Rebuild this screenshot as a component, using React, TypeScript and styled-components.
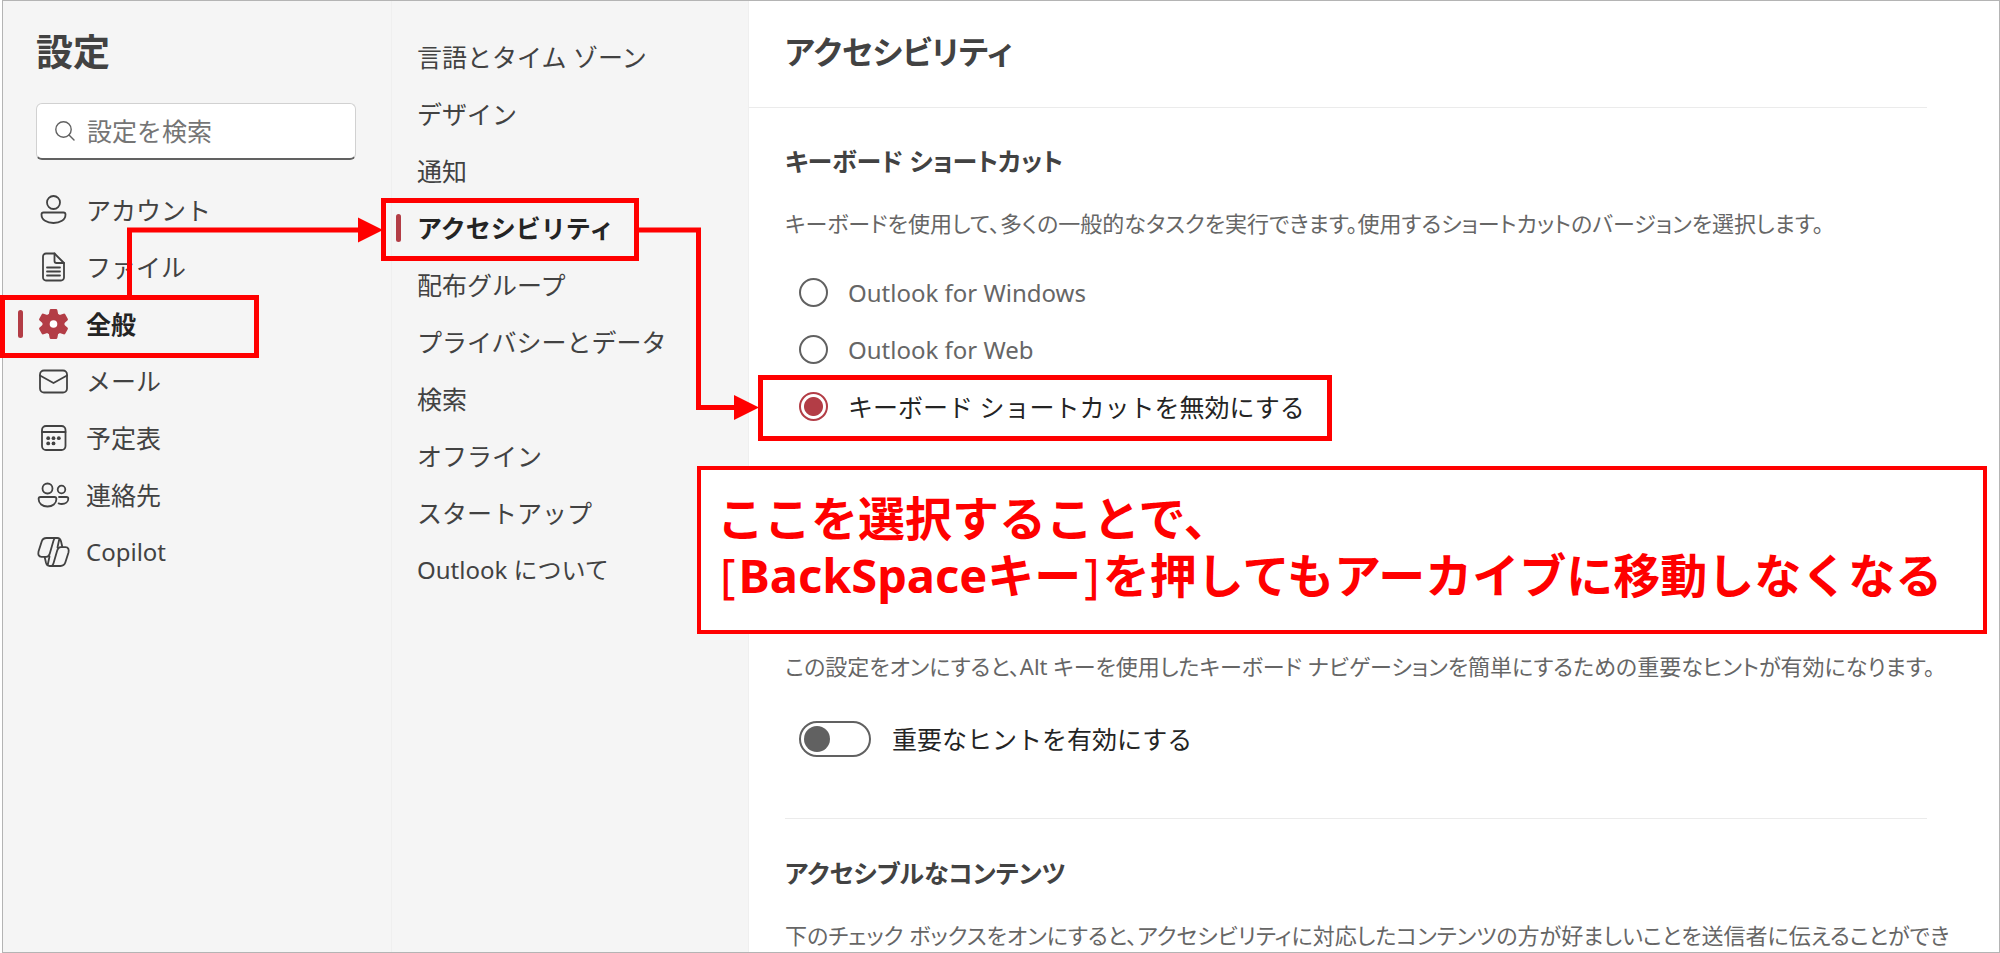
import React, { useState } from 'react';
import styled, { createGlobalStyle, css } from 'styled-components';

const color = {
  text: '#424242',
  strong: '#242424',
  muted: '#666666',
  accent: '#b33d46',
  line: '#ebebeb',
  pane: '#f5f5f5',
  mark: '#ff0000',
};

const GlobalStyle = createGlobalStyle`
  *, *::before, *::after { box-sizing: border-box; }
  body {
    margin: 0;
    background: #ffffff;
    color: ${color.text};
    font-family: 'Noto Sans', 'Noto Sans CJK JP', sans-serif;
    font-size: 25px;
    line-height: 36px;
  }
  h1, h2, h3, p, ul, fieldset { margin: 0; padding: 0; border: 0; }
  ul { list-style: none; }
`;

const Stage = styled.div`
  position: relative;
  height: 100vh;
  padding-left: 2px;
  overflow: hidden;
`;

const Frame = styled.div`
  display: flex;
  height: 100%;
  border: 1px solid #b4b4b4;
  overflow: hidden;
`;

const Categories = styled.aside`
  flex: 0 0 389px;
  min-width: 0;
  padding-top: 27px;
  background: ${color.pane};
  border-right: 1px solid #efefef;
`;

const SettingsTitle = styled.h1`
  padding-left: 33px;
  font-size: 37px;
  line-height: 48px;
`;

const SearchBox = styled.label`
  display: flex;
  align-items: center;
  gap: 12px;
  height: 57px;
  margin: 27px 35px 21px 33px;
  padding: 0 18px;
  background: #ffffff;
  border: 1px solid #d1d1d1;
  border-bottom: 2px solid #616161;
  border-radius: 6px;
`;

const SearchInput = styled.input`
  flex: 1;
  width: 100%;
  min-width: 0;
  padding: 0;
  border: 0;
  outline: 0;
  background: transparent;
  color: ${color.text};
  font: inherit;
  &::placeholder { color: #757575; opacity: 1; }
`;

const NavLink = styled.a<{ $active?: boolean; $latin?: boolean }>`
  display: flex;
  align-items: center;
  height: 57px;
  color: ${color.text};
  font-size: ${p => (p.$latin ? 24 : 25)}px;
  text-decoration: none;
  white-space: nowrap;
  &::before {
    content: '';
    width: 5px;
    height: 28px;
    border-radius: 3px;
  }
  ${p => p.$active && css`
    color: ${color.strong};
    font-weight: 700;
    &::before { background: ${color.accent}; }
  `}
`;

const CategoryLink = styled(NavLink)`
  padding-left: 15px;
  &::before { margin-right: 14px; }
`;

const PageLink = styled(NavLink)`
  padding-left: 4px;
  &::before { margin-right: 16px; }
`;

const NavIcon = styled.svg`
  flex: none;
  width: 33px;
  height: 32px;
  margin-right: 16px;
  fill: none;
  stroke: ${color.text};
  stroke-width: 1.8;
  stroke-linecap: round;
  stroke-linejoin: round;
`;

const SearchIcon = styled.svg`
  flex: none;
  width: 20px;
  height: 20px;
  fill: none;
  stroke: #616161;
  stroke-width: 1.4;
  stroke-linecap: round;
`;

const Pages = styled.nav`
  flex: 0 0 357px;
  min-width: 0;
  padding-top: 27px;
  background: ${color.pane};
  border-right: 1px solid #efefef;
`;

const Content = styled.main`
  flex: 1;
  min-width: 0;
  overflow: hidden;
`;

const ContentHeader = styled.header`
  margin-right: 72px;
  padding: 27px 0 31px 36px;
  border-bottom: 1px solid ${color.line};
`;

const PageTitle = styled.h2`
  font-size: 32px;
  line-height: 48px;
  font-feature-settings: 'palt';
`;

const Sections = styled.div`
  margin: 35px 72px 0 36px;
`;

const SectionTitle = styled.h3`
  margin-bottom: 26px;
  font-size: 25px;
  font-feature-settings: 'palt';
`;

const Description = styled.p`
  color: ${color.muted};
  font-size: 22px;
  font-feature-settings: 'palt';
  white-space: nowrap;
`;

const RadioGroup = styled.fieldset`
  margin: 23px 0 213px;
  padding-left: 14px;
`;

const Option = styled.label<{ $selected: boolean; $latin?: boolean }>`
  display: flex;
  align-items: center;
  gap: 20px;
  height: 57px;
  color: ${p => (p.$selected ? color.strong : color.muted)};
  font-size: ${p => (p.$latin ? 24 : 25)}px;
`;

const Radio = styled.input`
  appearance: none;
  width: 29px;
  height: 29px;
  margin: 0;
  border: 2px solid #616161;
  border-radius: 50%;
  &:checked {
    border-color: ${color.accent};
    background: radial-gradient(circle, ${color.accent} 9px, transparent 10px);
  }
`;

const SwitchRow = styled.label`
  display: flex;
  align-items: center;
  gap: 21px;
  margin-top: 37px;
  padding-left: 14px;
  color: ${color.strong};
`;

const Switch = styled.input`
  appearance: none;
  display: flex;
  align-items: center;
  width: 72px;
  height: 36px;
  margin: 0;
  padding: 0 3px;
  border: 2px solid #616161;
  border-radius: 18px;
  &::before {
    content: '';
    width: 26px;
    height: 26px;
    border-radius: 50%;
    background: #616161;
  }
  &:checked { justify-content: flex-end; }
`;

const Divider = styled.hr`
  height: 1px;
  margin: 61px 0 36px;
  border: 0;
  background: ${color.line};
`;

const Highlight = styled.div<{ $x: number; $y: number; $w: number; $h: number }>`
  position: absolute;
  left: ${p => p.$x}px;
  top: ${p => p.$y}px;
  width: ${p => p.$w}px;
  height: ${p => p.$h}px;
  border: 5px solid ${color.mark};
  pointer-events: none;
`;

const Arrows = styled.svg`
  position: absolute;
  left: 0;
  top: 0;
  width: 770px;
  height: 430px;
  pointer-events: none;
`;

const Callout = styled.div`
  position: absolute;
  left: 697px;
  right: 13px;
  top: 466px;
  height: 168px;
  padding: 20px 16px;
  border: 4px solid ${color.mark};
  background: #ffffff;
  color: ${color.mark};
  font-size: 47px;
  font-weight: 700;
  line-height: 57px;
  white-space: nowrap;
`;

const Bracket = styled.span`
  padding: 0 3px;
  font-weight: 400;
`;

const icons = {
  person: (
    <>
      <circle cx="16.5" cy="8.5" r="6.5" />
      <path d="M6.5 18.5H26.5C27.8 18.5 28.5 19.2 28.5 20.5C28.5 26 23 29 16.5 29S4.5 26 4.5 20.5C4.5 19.2 5.2 18.5 6.5 18.5Z" />
    </>
  ),
  file: (
    <>
      <path d="M9 2.5H17.5L27 12V26.5A3 3 0 0 1 24 29.5H9A3 3 0 0 1 6 26.5V5.5A3 3 0 0 1 9 2.5Z" />
      <path d="M17.5 2.5V10A2 2 0 0 0 19.5 12H27M10 16.5H23M10 20.5H23M10 24.5H23" />
    </>
  ),
  gear: (
    <g fill={color.accent} stroke="none">
      <circle cx="16.5" cy="16" r="11" />
      <path id="teeth" d="M12.6 2.2Q12.8 1 14 1H19Q20.2 1 20.4 2.2L21.3 7V25L20.4 29.8Q20.2 31 19 31H14Q12.8 31 12.6 29.8L11.7 25V7Z" />
      <use href="#teeth" transform="rotate(60 16.5 16)" />
      <use href="#teeth" transform="rotate(120 16.5 16)" />
      <circle cx="16.5" cy="16" r="3.8" fill="#ffffff" />
    </g>
  ),
  mail: (
    <>
      <rect x="3" y="5.5" width="27" height="22" rx="4" />
      <path d="M3 10.5L16.5 18L30 10.5" />
    </>
  ),
  calendar: (
    <>
      <rect x="5" y="4" width="23.5" height="24" rx="4" />
      <path d="M5 10H28.5" />
      <g fill={color.text} stroke="none">
        <circle cx="11.2" cy="16.2" r="1.9" />
        <circle cx="16.5" cy="16.2" r="1.9" />
        <circle cx="21.8" cy="16.2" r="1.9" />
        <circle cx="11.2" cy="21.4" r="1.9" />
        <circle cx="16.5" cy="21.4" r="1.9" />
      </g>
    </>
  ),
  people: (
    <>
      <circle cx="10.5" cy="9.5" r="5" />
      <circle cx="24.5" cy="10.5" r="3.8" />
      <path d="M3.5 18H17.5C18.8 18 19.4 18.7 19.4 20C19.4 24.7 15.5 27.5 10.5 27.5S1.6 24.7 1.6 20C1.6 18.7 2.2 18 3.5 18Z" />
      <path d="M22 18H29.5C30.7 18 31.3 18.7 31.3 19.8C31.3 23 28.3 25 24.8 25C23.6 25 22.6 24.8 21.6 24.4" />
    </>
  ),
  copilot: (
    <>
      <path id="lobe" d="M9.5 2H18.2C17.2 2.6 16.8 3.6 16.4 5L12.8 17.5C12.2 19.6 11.4 20.8 9.2 20.8H4.5C1.6 20.8.9 18.4 1.5 15.6L4.7 5.4C5.5 3 7 2 9.5 2Z" />
      <path id="band" d="M18.2 2H20.4C22.4 2 23.4 3.2 24 5.2L25.4 11.2M20.5 11.5L22.3 3" />
      <use href="#lobe" transform="rotate(180 16.5 16)" />
      <use href="#band" transform="rotate(180 16.5 16)" />
    </>
  ),
};

const categories: { icon: keyof typeof icons; label: string; active?: boolean; latin?: boolean }[] = [
  { icon: 'person', label: 'アカウント' },
  { icon: 'file', label: 'ファイル' },
  { icon: 'gear', label: '全般', active: true },
  { icon: 'mail', label: 'メール' },
  { icon: 'calendar', label: '予定表' },
  { icon: 'people', label: '連絡先' },
  { icon: 'copilot', label: 'Copilot', latin: true },
];

const pages: { label: string; active?: boolean; latin?: boolean }[] = [
  { label: '言語とタイム ゾーン' },
  { label: 'デザイン' },
  { label: '通知' },
  { label: 'アクセシビリティ', active: true },
  { label: '配布グループ' },
  { label: 'プライバシーとデータ' },
  { label: '検索' },
  { label: 'オフライン' },
  { label: 'スタートアップ' },
  { label: 'Outlook について', latin: true },
];

const shortcutOptions = [
  { value: 'windows', label: 'Outlook for Windows', latin: true },
  { value: 'web', label: 'Outlook for Web', latin: true },
  { value: 'off', label: 'キーボード ショートカットを無効にする', latin: false },
];

export default function App() {
  const [shortcuts, setShortcuts] = useState('off');
  const [hints, setHints] = useState(false);

  return (
    <>
      <GlobalStyle />
      <Stage>
        <Frame>
          <Categories>
            <SettingsTitle>設定</SettingsTitle>
            <SearchBox>
              <SearchIcon viewBox="0 0 20 20" aria-hidden="true">
                <circle cx="8.5" cy="8.5" r="7.7" />
                <path d="M14 14L19 19" />
              </SearchIcon>
              <SearchInput type="search" placeholder="設定を検索" aria-label="設定を検索" />
            </SearchBox>
            <nav>
              <ul>
                {categories.map(c => (
                  <li key={c.label}>
                    <CategoryLink href="#" $active={c.active} $latin={c.latin}>
                      <NavIcon viewBox="0 0 33 32" aria-hidden="true">{icons[c.icon]}</NavIcon>
                      {c.label}
                    </CategoryLink>
                  </li>
                ))}
              </ul>
            </nav>
          </Categories>

          <Pages>
            <ul>
              {pages.map(p => (
                <li key={p.label}>
                  <PageLink href="#" $active={p.active} $latin={p.latin}>{p.label}</PageLink>
                </li>
              ))}
            </ul>
          </Pages>

          <Content>
            <ContentHeader>
              <PageTitle>アクセシビリティ</PageTitle>
            </ContentHeader>
            <Sections>
              <section>
                <SectionTitle>キーボード ショートカット</SectionTitle>
                <Description>
                  キーボードを使用して、多くの一般的なタスクを実行できます。使用するショートカットのバージョンを選択します。
                </Description>
                <RadioGroup aria-label="キーボード ショートカット">
                  {shortcutOptions.map(o => (
                    <Option key={o.value} $selected={shortcuts === o.value} $latin={o.latin}>
                      <Radio
                        type="radio"
                        name="shortcuts"
                        checked={shortcuts === o.value}
                        onChange={() => setShortcuts(o.value)}
                      />
                      {o.label}
                    </Option>
                  ))}
                </RadioGroup>
              </section>
              <section>
                <Description>
                  この設定をオンにすると、Alt キーを使用したキーボード ナビゲーションを簡単にするための重要なヒントが有効になります。
                </Description>
                <SwitchRow>
                  <Switch type="checkbox" role="switch" checked={hints} onChange={() => setHints(!hints)} />
                  重要なヒントを有効にする
                </SwitchRow>
              </section>
              <Divider />
              <section>
                <SectionTitle>アクセシブルなコンテンツ</SectionTitle>
                <Description>
                  下のチェック ボックスをオンにすると、アクセシビリティに対応したコンテンツの方が好ましいことを送信者に伝えることができ
                </Description>
              </section>
            </Sections>
          </Content>
        </Frame>

        <Highlight $x={0} $y={295} $w={259} $h={63} />
        <Highlight $x={381} $y={198} $w={258} $h={63} />
        <Highlight $x={758} $y={375} $w={574} $h={66} />
        <Arrows viewBox="0 0 770 430" aria-hidden="true">
          <g fill="none" stroke={color.mark} strokeWidth="5">
            <path d="M129.500 297V230H360" />
            <path d="M637 230H698.500V407.500H736" />
          </g>
          <g fill={color.mark}>
            <path d="M358 217.500L383 230L358 242.500Z" />
            <path d="M734 395L759 407.500L734 420Z" />
          </g>
        </Arrows>
        <Callout>
          ここを選択することで、
          <br />
          <Bracket>[</Bracket>BackSpaceキー<Bracket>]</Bracket>を押してもアーカイブに移動しなくなる
        </Callout>
      </Stage>
    </>
  );
}
